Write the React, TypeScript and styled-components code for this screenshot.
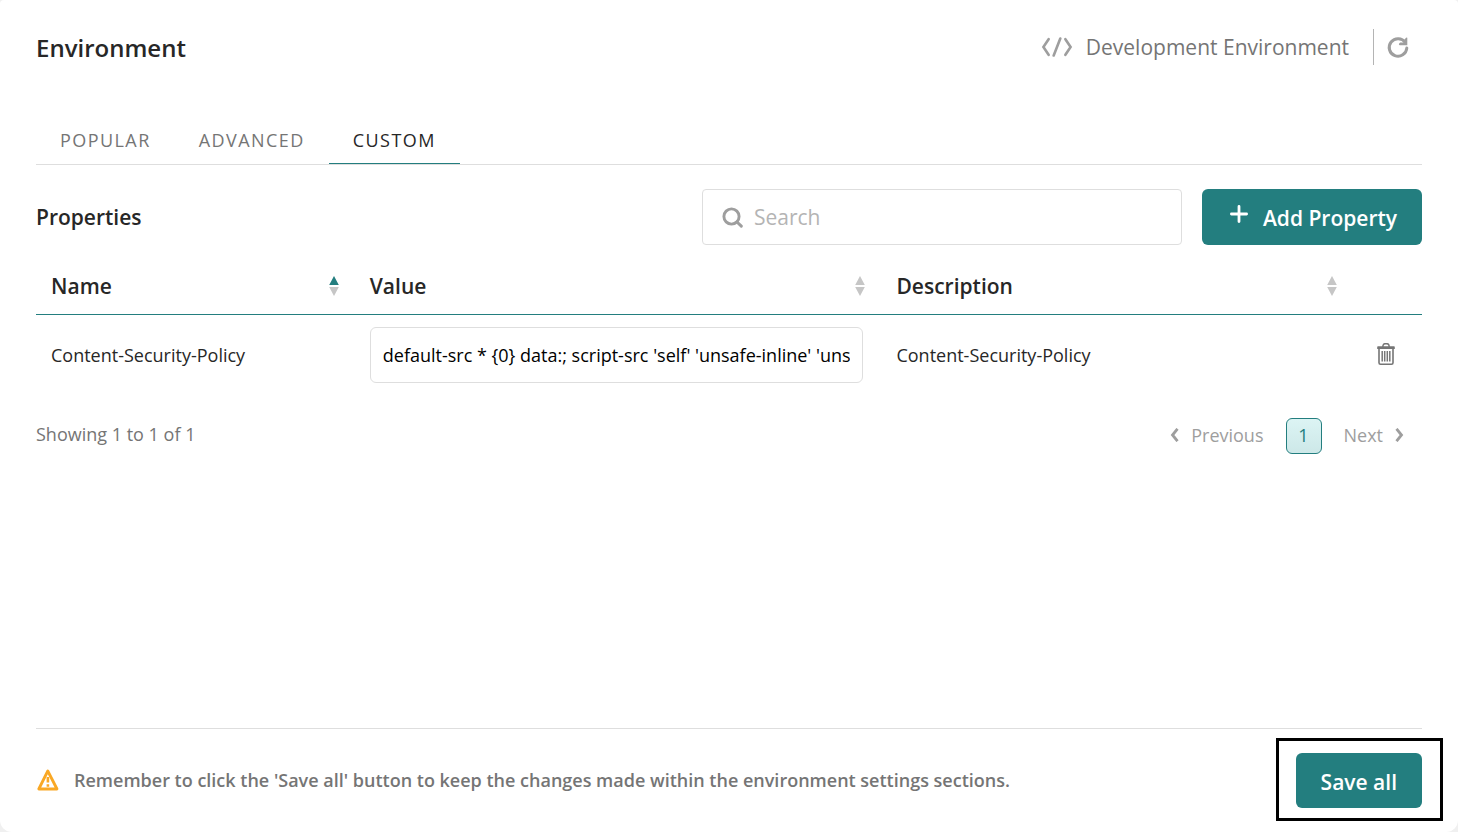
import React, { useState } from "react";
import styled, { createGlobalStyle, css } from "styled-components";

const teal = "#237e7f";
const line = "#dedede";
const ink = "#272727";
const muted = "#757575";
const faint = "#9e9e9e";

const GlobalStyle = createGlobalStyle`
  *, *::before, *::after { box-sizing: border-box; }
  body {
    margin: 0;
    background: #f0f0f0;
    color: ${ink};
    font: 18px/24px "Open Sans", "Noto Sans", sans-serif;
  }
  button, input { font: inherit; }
`;

const Card = styled.main`
  display: flex;
  flex-direction: column;
  min-height: 100vh;
  padding: 28px 36px 0;
  background: #fff;
  border-radius: 4px 4px 12px 12px;
`;

const Header = styled.header`
  display: flex;
  align-items: center;
  justify-content: space-between;
  min-height: 40px;
`;

const Title = styled.h1`
  margin: 0;
  font-size: 24px;
  line-height: 40px;
  font-weight: 600;
`;

const EnvironmentInfo = styled.div`
  display: flex;
  align-items: center;
  padding-bottom: 2px;
  color: ${muted};
  font-size: 21px;
`;

const EnvironmentName = styled.span`
  margin: 0 24px 0 13px;
`;

const IconButton = styled.button`
  display: flex;
  align-items: center;
  justify-content: center;
  margin: 0 auto;
  padding: 0;
  border: 0;
  background: none;
  color: ${muted};
  cursor: pointer;
`;

const RefreshButton = styled(IconButton)`
  height: 36px;
  padding: 2px 12px 0;
  border-left: 1px solid #b4b4b4;
  color: ${faint};
`;

const Tabs = styled.div`
  display: flex;
  align-items: flex-end;
  margin-top: 48px;
  border-bottom: 1px solid ${line};
`;

const Tab = styled.button<{ $active: boolean }>`
  height: 48px;
  padding: 0 24px;
  border: 0;
  background: none;
  color: ${muted};
  letter-spacing: 0.08em;
  line-height: 48px;
  cursor: pointer;
  ${(p) =>
    p.$active &&
    css`
      border-bottom: 1px solid ${teal};
      color: ${ink};
      line-height: 46px;
    `}
`;

const Toolbar = styled.div`
  display: flex;
  align-items: center;
  gap: 20px;
  margin-top: 24px;
`;

const SectionTitle = styled.h2`
  flex: 1;
  margin: 0;
  font-size: 21px;
  line-height: 28px;
  font-weight: 600;
`;

const SearchBox = styled.label`
  display: flex;
  align-items: center;
  gap: 11px;
  width: 480px;
  height: 56px;
  padding: 0 19px;
  border: 1px solid ${line};
  border-radius: 4px;
  color: ${faint};
`;

const SearchInput = styled.input`
  flex: 1;
  min-width: 0;
  padding: 0;
  border: 0;
  outline: 0;
  background: none;
  color: ${ink};
  font-size: 21px;
  &::placeholder { color: #b4b4b4; }
`;

const PrimaryButton = styled.button`
  display: inline-flex;
  align-items: center;
  gap: 12px;
  height: 56px;
  padding: 2px 25px 0;
  border: 0;
  border-radius: 6px;
  background: ${teal};
  color: #fff;
  font-size: 21px;
  font-weight: 600;
  white-space: nowrap;
  cursor: pointer;
  svg { margin-bottom: 8px; }
`;

const SaveButton = styled(PrimaryButton)`
  height: 55px;
`;

const Table = styled.table`
  width: 100%;
  margin-top: 12px;
  border-collapse: separate;
  border-spacing: 0;
  table-layout: fixed;
`;

const HeadCell = styled.th<{ $width: string }>`
  width: ${(p) => p.$width};
  height: 58px;
  padding: 0 16px 0 15px;
  border-bottom: 1px solid ${teal};
  font-size: 21px;
  font-weight: 600;
  text-align: left;
`;

const SortButton = styled.button`
  display: flex;
  align-items: center;
  justify-content: space-between;
  width: 100%;
  padding: 0;
  border: 0;
  background: none;
  color: inherit;
  cursor: pointer;
`;

const Cell = styled.td`
  height: 80px;
  padding: 0 18px 0 15px;
`;

const ActionCell = styled(Cell)`
  padding: 0 3px 2px 0;
`;

const ValueInput = styled.input`
  display: block;
  width: 100%;
  height: 56px;
  padding: 0 12px;
  border: 1px solid ${line};
  border-radius: 6px;
  background: #fff;
  color: #000;
`;

const TableFooter = styled.div`
  display: flex;
  align-items: center;
  justify-content: space-between;
  margin-top: 23px;
  color: ${muted};
`;

const Summary = styled.span`
  padding-bottom: 4px;
`;

const Pager = styled.nav`
  display: flex;
  align-items: center;
  padding-right: 18px;
`;

const PagerButton = styled.button`
  display: inline-flex;
  align-items: center;
  gap: 12px;
  padding: 0 0 2px;
  border: 0;
  background: none;
  color: ${faint};
`;

const PageNumber = styled.button`
  width: 36px;
  height: 36px;
  margin: 0 22px;
  padding: 0 0 2px;
  border: 1px solid ${teal};
  border-radius: 6px;
  background: linear-gradient(#dcf4f4, #cde8e8);
  color: ${teal};
`;

const BottomBar = styled.footer`
  display: flex;
  align-items: center;
  gap: 14px;
  height: 104px;
  margin-top: auto;
  padding-bottom: 2px;
  border-top: 1px solid ${line};
`;

const Reminder = styled.p`
  flex: 1;
  margin: 0;
  color: ${muted};
  font-weight: 600;
`;

const SaveFrame = styled.div`
  display: flex;
  margin-right: -21px;
  padding: 12px 18px 10px 17px;
  border: 3px solid #000;
`;

const CodeIcon = () => (
  <svg width="32" height="20" viewBox="0 0 32 20" fill="none" stroke="#9e9e9e" strokeWidth="2.6" strokeLinecap="round" aria-hidden="true">
    <path d="M7.6 2.2 2.4 10l5.200 7.800M24.400 2.200l5.200 7.800-5.200 7.800M19.300 1.500 12.700 18.500" />
  </svg>
);

const RefreshIcon = () => (
  <svg width="24" height="24" viewBox="0 0 24 24" fill="none" stroke="currentColor" aria-hidden="true">
    <path d="M19.3 6.5A8.8 8.8 0 1 0 20.8 12" strokeWidth="3" strokeLinecap="round" />
    <path d="M21.3 1.8v7.4h-7.5a1 1 0 0 1-.6-1.7l1-1h3.6V4.4l2-2.3a1 1 0 0 1 1.5-.3Z" fill="currentColor" stroke="none" />
  </svg>
);

const SearchIcon = () => (
  <svg width="21" height="21" viewBox="0 0 21 21" fill="none" stroke="currentColor" strokeLinecap="round" aria-hidden="true">
    <circle cx="9.5" cy="9.5" r="7.6" strokeWidth="2.9" />
    <path d="m15 15 4.3 4.1" strokeWidth="3" />
  </svg>
);

const PlusIcon = () => (
  <svg width="24" height="18" viewBox="0 0 24 18" fill="none" stroke="currentColor" strokeWidth="2.8" strokeLinecap="round" aria-hidden="true">
    <path d="M12 1.400v15.200M4.400 9h15.200" />
  </svg>
);

const SortIcon = ({ ascending }: { ascending?: boolean }) => (
  <svg width="10" height="20" viewBox="0 0 10 20" aria-hidden="true">
    <path d="M5 0l4.800 9H.2Z" fill={ascending ? teal : "#c6c6c6"} />
    <path d="M5 20l4.800-9H.2Z" fill="#c6c6c6" />
  </svg>
);

const TrashIcon = () => (
  <svg width="18" height="22" viewBox="0 0 18 22" fill="none" stroke="currentColor" aria-hidden="true">
    <path d="M5.8 4c0-2 .8-3.200 2-3.200h2.400c1.200 0 2 1.200 2 3.200" strokeWidth="1.400" />
    <path d="M1 3.200h16a1 1 0 0 1 .8 1V6H.2V4.200a1 1 0 0 1 .8-1Z" fill="currentColor" stroke="none" />
    <path d="M2 6v13.700q0 1.500 1.500 1.500h11q1.500 0 1.500-1.500V6" strokeWidth="1.600" />
    <path d="M5.200 8v10.500M7.700 8v10.500M10.300 8v10.500M12.800 8v10.500" strokeWidth="1.500" />
  </svg>
);

const ChevronIcon = ({ next }: { next?: boolean }) => (
  <svg width="9" height="14" viewBox="0 0 9 14" fill="none" stroke="currentColor" strokeWidth="2.8" aria-hidden="true">
    <path d={next ? "M1.500 .8 6.500 7 1.500 13.200" : "M7.500 .8 2.500 7l5 6.200"} />
  </svg>
);

const WarningIcon = () => (
  <svg width="24" height="24" viewBox="0 0 24 24" fill="none" stroke="#f9a825" strokeLinejoin="round" aria-hidden="true">
    <path d="M11.800 3 21 21H2.800Z" strokeWidth="2.800" />
    <path d="M11.900 9v5.500M11.900 16.300v2.500" strokeWidth="2.600" />
  </svg>
);

const tabs = ["POPULAR", "ADVANCED", "CUSTOM"];

const columns = [
  { label: "Name", width: "23%" },
  { label: "Value", width: "38%" },
  { label: "Description", width: "34%" },
];

const properties = [
  {
    name: "Content-Security-Policy",
    value: "default-src * {0} data:; script-src 'self' 'unsafe-inline' 'unsafe-eval'",
    description: "Content-Security-Policy",
  },
];

export default function App() {
  const [activeTab, setActiveTab] = useState("CUSTOM");

  return (
    <>
      <GlobalStyle />
      <Card>
        <Header>
          <Title>Environment</Title>
          <EnvironmentInfo>
            <CodeIcon />
            <EnvironmentName>Development Environment</EnvironmentName>
            <RefreshButton type="button" aria-label="Refresh">
              <RefreshIcon />
            </RefreshButton>
          </EnvironmentInfo>
        </Header>

        <Tabs role="tablist">
          {tabs.map((tab) => (
            <Tab
              key={tab}
              type="button"
              role="tab"
              aria-selected={tab === activeTab}
              $active={tab === activeTab}
              onClick={() => setActiveTab(tab)}
            >
              {tab}
            </Tab>
          ))}
        </Tabs>

        <Toolbar>
          <SectionTitle>Properties</SectionTitle>
          <SearchBox>
            <SearchIcon />
            <SearchInput type="text" placeholder="Search" aria-label="Search" />
          </SearchBox>
          <PrimaryButton type="button">
            <PlusIcon />
            Add Property
          </PrimaryButton>
        </Toolbar>

        <Table>
          <thead>
            <tr>
              {columns.map(({ label, width }, i) => (
                <HeadCell key={label} $width={width} aria-sort={i === 0 ? "ascending" : "none"}>
                  <SortButton type="button">
                    {label}
                    <SortIcon ascending={i === 0} />
                  </SortButton>
                </HeadCell>
              ))}
              <HeadCell $width="5%" aria-label="Actions" />
            </tr>
          </thead>
          <tbody>
            {properties.map((property) => (
              <tr key={property.name}>
                <Cell>{property.name}</Cell>
                <Cell>
                  <ValueInput type="text" defaultValue={property.value} aria-label={`${property.name} value`} />
                </Cell>
                <Cell>{property.description}</Cell>
                <ActionCell>
                  <IconButton type="button" aria-label={`Delete ${property.name}`}>
                    <TrashIcon />
                  </IconButton>
                </ActionCell>
              </tr>
            ))}
          </tbody>
        </Table>

        <TableFooter>
          <Summary>Showing 1 to 1 of 1</Summary>
          <Pager aria-label="Pagination">
            <PagerButton type="button">
              <ChevronIcon />
              Previous
            </PagerButton>
            <PageNumber type="button" aria-current="page">1</PageNumber>
            <PagerButton type="button">
              Next
              <ChevronIcon next />
            </PagerButton>
          </Pager>
        </TableFooter>

        <BottomBar>
          <WarningIcon />
          <Reminder>
            Remember to click the 'Save all' button to keep the changes made within the environment settings sections.
          </Reminder>
          <SaveFrame>
            <SaveButton type="button">Save all</SaveButton>
          </SaveFrame>
        </BottomBar>
      </Card>
    </>
  );
}
